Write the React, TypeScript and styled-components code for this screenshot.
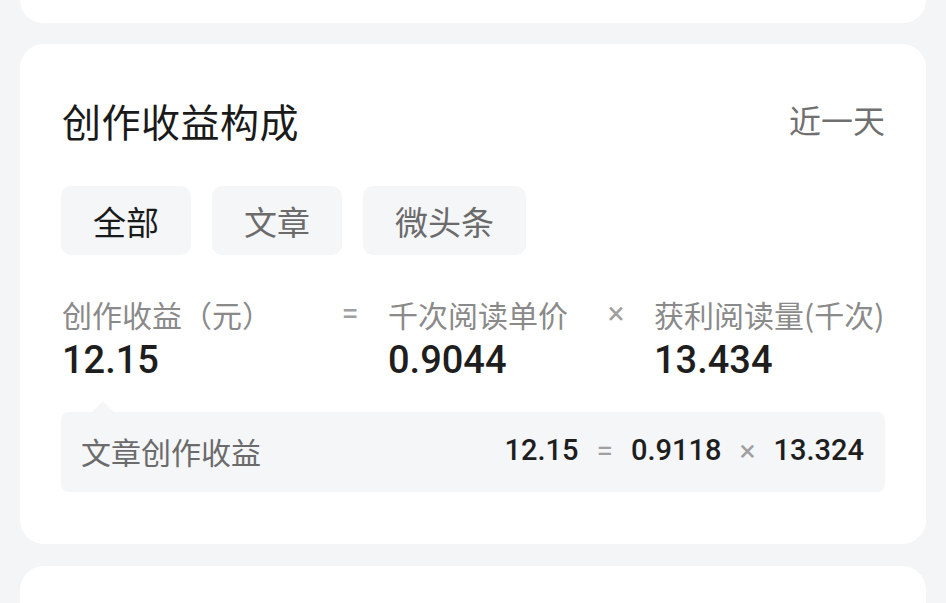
import React from "react";
import styled, { createGlobalStyle } from "styled-components";

const Global = createGlobalStyle`
  html, body { margin: 0; padding: 0; }
  body {
    background: #f4f5f7;
    font-family: "Noto Sans CJK SC", "Noto Sans", sans-serif;
    overflow: hidden;
    height: 603px;
  }
`;

const Page = styled.div`
  display: flex;
  flex-direction: column;
  gap: 21px;
  padding: 0 20px;
`;

const TopCard = styled.div`
  height: 23px;
  background: #fff;
  border-radius: 0 0 24px 24px;
`;

const Card = styled.div`
  background: #fff;
  border-radius: 24px;
  padding: 50px 41px 52px 41px;
  display: flex;
  flex-direction: column;
`;

const BottomCard = styled.div`
  background: #fff;
  border-radius: 24px 24px 0 0;
  height: 40px;
  margin-top: 1px;
`;

const Header = styled.div`
  height: 56px;
  display: flex;
  align-items: center;
  justify-content: space-between;
  padding-left: 1px;
`;

const Title = styled.div`
  font-size: 39px;
  color: #1a1a1a;
  font-weight: 400;
  margin-top: -4px;
  letter-spacing: 0.5px;
`;

const Range = styled.div`
  font-size: 32px;
  color: #707070;
  margin-top: -6px;
`;

const Tabs = styled.div`
  display: flex;
  gap: 21px;
  margin-top: 36px;
`;

const Tab = styled.div<{ $active?: boolean }>`
  height: 69px;
  padding: 0 32px;
  display: flex;
  align-items: center;
  border-radius: 10px;
  background: #f5f6f8;
  font-size: 33px;
  color: ${(p) => (p.$active ? "#1a1a1a" : "#6b6b6b")};
`;

const Formula = styled.div`
  display: grid;
  grid-template-columns: 268px 58px 208px 58px 1fr;
  margin-top: 39px;
  padding-left: 1px;
`;

const Label = styled.div`
  font-size: 30px;
  line-height: 40px;
  color: #8a8a8a;
  white-space: nowrap;
`;

const Op = styled.div`
  font-family: "Roboto", sans-serif;
  font-size: 31px;
  line-height: 40px;
  color: #a0a0a0;
  text-align: center;
  padding-right: 18px;
`;

const Value = styled.div`
  font-family: "Roboto", sans-serif;
  font-size: 38px;
  font-weight: 500;
  line-height: 44px;
  color: #1e1e1e;
  margin-top: 4px;
`;

const Detail = styled.div`
  position: relative;
  margin-top: 30px;
  height: 80px;
  background: #f5f6f8;
  border-radius: 8px;
  display: flex;
  align-items: center;
  justify-content: space-between;
  padding: 0 21px 0 20px;
`;

const Pointer = styled.div`
  position: absolute;
  left: 31px;
  top: -11px;
  width: 0;
  height: 0;
  border-left: 11px solid transparent;
  border-right: 11px solid transparent;
  border-bottom: 11px solid #f5f6f8;
`;

const DetailLabel = styled.div`
  font-size: 30px;
  color: #6b6b6b;
  margin-top: -2px;
`;

const Equation = styled.div`
  display: flex;
  align-items: center;
  gap: 18px;
  font-family: "Roboto", sans-serif;
  font-size: 29px;
  font-weight: 500;
  color: #1e1e1e;
  margin-top: -4px;
`;

const SmallOp = styled.span`
  color: #a0a0a0;
  font-weight: 400;
  font-size: 30px;
`;

export default function App() {
  return (
    <>
      <Global />
      <Page>
        <TopCard />
        <Card>
          <Header>
            <Title>创作收益构成</Title>
            <Range>近一天</Range>
          </Header>
          <Tabs>
            <Tab $active>全部</Tab>
            <Tab>文章</Tab>
            <Tab>微头条</Tab>
          </Tabs>
          <Formula>
            <div>
              <Label>创作收益（元）</Label>
              <Value>12.15</Value>
            </div>
            <Op>=</Op>
            <div>
              <Label>千次阅读单价</Label>
              <Value>0.9044</Value>
            </div>
            <Op>×</Op>
            <div>
              <Label>获利阅读量(千次)</Label>
              <Value>13.434</Value>
            </div>
          </Formula>
          <Detail>
            <Pointer />
            <DetailLabel>文章创作收益</DetailLabel>
            <Equation>
              <span>12.15</span>
              <SmallOp>=</SmallOp>
              <span>0.9118</span>
              <SmallOp>×</SmallOp>
              <span>13.324</span>
            </Equation>
          </Detail>
        </Card>
        <BottomCard />
      </Page>
    </>
  );
}
